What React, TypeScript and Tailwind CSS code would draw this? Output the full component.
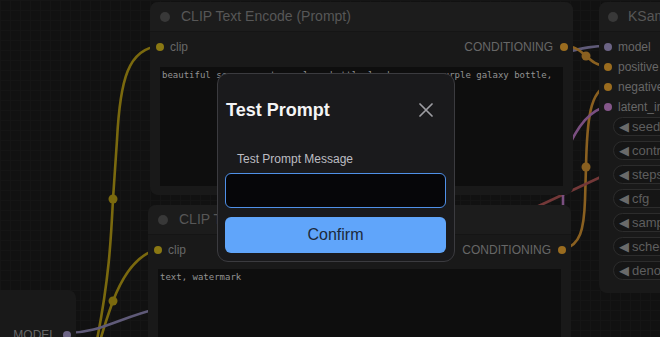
import React from "react";

const sans = "font-['Liberation_Sans',Arial,sans-serif]";

function SlotDot({ color }: { color: string }) {
  return <span className="block w-[8px] h-[8px] rounded-full shrink-0" style={{ backgroundColor: color }} />;
}

function TitleBar({ title, dotOffset, textOffset }: { title: string; dotOffset: number; textOffset: number }) {
  return (
    <div className="h-[30px] flex items-center bg-[#1c1c1c] border-b border-[#151515] rounded-t-[8px] shrink-0">
      <span className="block w-[10px] h-[10px] rounded-full bg-[#383838] shrink-0" style={{ marginLeft: dotOffset - 5 }} />
      <span className="text-[14px] text-[#575757] whitespace-nowrap" style={{ marginLeft: textOffset - dotOffset - 5 }}>
        {title}
      </span>
    </div>
  );
}

function ClipNode({
  x,
  y,
  h,
  text,
  gap,
}: {
  x: number;
  y: number;
  h: number;
  text: string;
  gap: string;
}) {
  return (
    <div
      className={`absolute w-[423px] bg-[#191919] rounded-[8px] flex flex-col ${sans}`}
      style={{ left: x, top: y, height: h }}
    >
      <TitleBar title="CLIP Text Encode (Prompt)" dotOffset={15} textOffset={31} />
      <div className="h-[20px] mt-[5px] flex items-center justify-between text-[12px] text-[#676767]">
        <div className="flex items-center pl-[6px] gap-[6px]">
          <SlotDot color="#8a7813" />
          <span>clip</span>
        </div>
        <div className="flex items-center pr-[5px] gap-[7px]">
          <span>CONDITIONING</span>
          <SlotDot color="#9a6c1f" />
        </div>
      </div>
      <div
        className={`${gap} mx-[10px] flex-1 mb-[9px] bg-[#0e0e0e] px-[2px] pt-[2px] font-['DejaVu_Sans_Mono',monospace] text-[9px] leading-[12px] text-[#929292] whitespace-nowrap overflow-hidden`}
      >
        {text}
      </div>
    </div>
  );
}

const inputs = [
  { name: "model", color: "#6c6485" },
  { name: "positive", color: "#9a6c1f" },
  { name: "negative", color: "#9a6c1f" },
  { name: "latent_image", color: "#85578a" },
];

const widgets = ["seed", "control_after_generate", "steps", "cfg", "sampler_name", "scheduler", "denoise"];

function KSampler() {
  return (
    <div className={`absolute left-[599px] top-[2px] w-[220px] h-[291px] bg-[#191919] rounded-[8px] flex flex-col ${sans}`}>
      <TitleBar title="KSampler" dotOffset={14} textOffset={29} />
      <div className="mt-[5px] flex flex-col">
        {inputs.map((s) => (
          <div key={s.name} className="h-[20px] flex items-center pl-[5px] gap-[6px] text-[12px] text-[#676767]">
            <SlotDot color={s.color} />
            <span>{s.name}</span>
          </div>
        ))}
      </div>
      <div className="ml-[14px] flex flex-col gap-[5px]">
        {widgets.map((w) => (
          <div
            key={w}
            className="h-[19px] rounded-full border border-[#2c2c2c] bg-[#151515] flex items-center pl-[5px] text-[13px] text-[#5e5e5e]"
          >
            <span className="text-[#6a6a6a] text-[13px] font-['DejaVu_Sans',sans-serif] leading-none">◀</span>
            <span className="ml-[3px] whitespace-nowrap">{w}</span>
          </div>
        ))}
      </div>
    </div>
  );
}

function Wires() {
  return (
    <svg className="absolute left-0 top-0" width={660} height={337} viewBox="0 0 660 337" fill="none">
      <g strokeLinecap="round">
        <path d="M160 46 C 128 48 120 80 117 140 L 113 199 C 111 240 109 280 96 345" stroke="#7a690e" strokeWidth={2.6} />
        <path d="M158 249 C 135 255 121 280 113 301 C 108 315 104 326 99 345" stroke="#7a690e" strokeWidth={2.6} />
        <path d="M67 333 C 100 333 118 318 160 308" stroke="#5f5a78" strokeWidth={2.6} />
        <path d="M560 54 C 585 47 595 46 608 46" stroke="#5f5a78" strokeWidth={2.6} />
        <path d="M564 46 C 586 46 586 66 608 66" stroke="#8a6020" strokeWidth={2.6} />
        <path d="M564 249 C 580 245 584 230 585 200 L 586 167 C 587 120 590 90 608 86" stroke="#8a6020" strokeWidth={2.6} />
        <path d="M608 106 C 590 110 578 125 566 152" stroke="#7a4f80" strokeWidth={2.6} />
        <path d="M530 210 L 605 175" stroke="#733838" strokeWidth={2.6} />
        <path d="M563 194 L 563 207" stroke="#7a4f80" strokeWidth={2.6} />
      </g>
      <circle cx={113} cy={199} r={4.5} fill="#7a690e" />
      <circle cx={113} cy={301} r={4.5} fill="#7a690e" />
      <circle cx={586} cy={56} r={4.5} fill="#8a6020" />
      <circle cx={586} cy={167} r={4.5} fill="#8a6020" />
    </svg>
  );
}

function Dialog() {
  return (
    <div
      className={`absolute left-[217px] top-[73px] w-[238px] rounded-[11px] border border-[#3b3b3f] bg-[#1a1a1c] pl-[7px] pr-[8px] pb-[8px] flex flex-col ${sans}`}
    >
      <div className="h-[72px] flex items-center justify-between pl-[1px] pr-[13px]">
        <span className="text-[18px] font-bold text-[#f4f4f5]">Test Prompt</span>
        <svg width="14" height="14" viewBox="0 0 14 14" fill="none">
          <path d="M1 1 L13 13 M13 1 L1 13" stroke="#9d9da2" strokeWidth={1.7} strokeLinecap="round" />
        </svg>
      </div>
      <label className="mt-[5px] pl-[12px] h-[16px] flex items-center text-[12px] text-[#bdbdc2]">Test Prompt Message</label>
      <div className="mt-[6px] h-[35px] rounded-[6px] border border-[#4f90e8] bg-[#060609]" />
      <button className="mt-[9px] h-[36px] rounded-[6px] bg-[#60a5fa] text-[16px] text-[#1c2a3b] flex items-center justify-center">
        Confirm
      </button>
    </div>
  );
}

export default function App() {
  return (
    <div className="relative w-[660px] h-[337px] overflow-hidden bg-[#111111] bg-[linear-gradient(to_right,#151515_1px,transparent_1px),linear-gradient(to_bottom,#151515_1px,transparent_1px)] bg-size-[10px_10px]">
      <Wires />
      <ClipNode
        x={150}
        y={2}
        h={193}
        gap="mt-[10px]"
        text="beautiful scenery nature glass bottle landscape, , purple galaxy bottle,"
      />
      <ClipNode x={148} y={205} h={200} gap="mt-[9px]" text="text, watermark" />
      <KSampler />
      <div className={`absolute left-[-100px] top-[290px] w-[176px] h-[80px] bg-[#191919] rounded-[8px] ${sans}`}>
        <div className="absolute right-[5px] top-[36px] flex items-center gap-[7px] text-[12px] text-[#676767]">
          <span>MODEL</span>
          <SlotDot color="#6c6485" />
        </div>
      </div>
      <Dialog />
    </div>
  );
}
